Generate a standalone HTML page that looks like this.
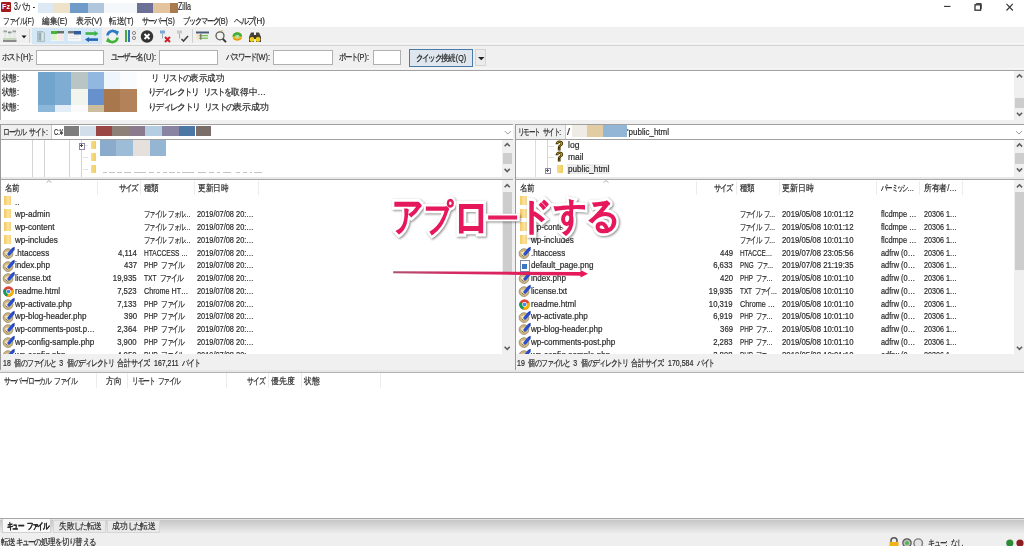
<!DOCTYPE html>
<html><head><meta charset="utf-8"><style>
html,body{margin:0;padding:0;}
body{width:1024px;height:546px;position:relative;overflow:hidden;background:#f0f0f0;font-family:"Liberation Sans", sans-serif;}
.t{position:absolute;white-space:pre;-webkit-text-stroke:0.2px #2a2a2a;filter:blur(0.35px);}
</style></head><body>
<div style="position:absolute;left:0px;top:0px;width:1024px;height:27px;background:#ffffff;"></div>
<div style="position:absolute;left:1.2px;top:1.8px;width:9.6px;height:9.9px;background:#a3191c;border-radius:1px"></div>
<div style="position:absolute;left:2px;top:3px;width:8px;height:8px;font:bold 7px/8px 'Liberation Sans',sans-serif;color:#fff;text-align:center">Fz</div>
<div class="t" style="left:14.00px;top:0.30px;font-size:10px;line-height:14px;color:#2a2a2a;font-weight:normal;word-spacing:2px;transform:scaleX(0.6971);transform-origin:left center;">3<span style="letter-spacing:-1.78px">パカ</span> -</div>
<div style="position:absolute;left:37.5px;top:3.2px;width:15.0px;height:9.4px;background:#dce8f4;"></div>
<div style="position:absolute;left:52.5px;top:3.2px;width:17.5px;height:9.4px;background:#eee2cb;"></div>
<div style="position:absolute;left:70px;top:3.2px;width:18px;height:9.4px;background:#6e9bc7;"></div>
<div style="position:absolute;left:88px;top:3.2px;width:16px;height:9.4px;background:#b0c6dc;"></div>
<div style="position:absolute;left:104px;top:3.2px;width:33px;height:9.4px;background:#f5f8fb;"></div>
<div style="position:absolute;left:137px;top:3.2px;width:16px;height:9.4px;background:#6c7097;"></div>
<div style="position:absolute;left:153px;top:3.2px;width:17px;height:9.4px;background:#e4c49f;"></div>
<div style="position:absolute;left:170px;top:3.2px;width:8px;height:9.4px;background:#a87a4d;"></div>
<div class="t" style="left:178.20px;top:0.00px;font-size:10px;line-height:14px;color:#2a2a2a;font-weight:normal;word-spacing:0px;transform:scaleX(0.7087);transform-origin:left center;">Zilla</div>
<svg style="position:absolute;left:940px;top:0;filter:blur(0.3px)" width="84" height="14" viewBox="0 0 84 14"><path d="M4 6.4H10.5" stroke="#333" stroke-width="1.1"/><rect x="35" y="4.8" width="5.6" height="5.4" fill="none" stroke="#333" stroke-width="1.3"/><path d="M36.2 4.2V3.6H41.2V8.8H40.8" fill="none" stroke="#333" stroke-width="1"/><path d="M66.5 3.8L72.8 10.5M72.8 3.8L66.5 10.5" stroke="#333" stroke-width="1.1"/></svg>
<div class="t" style="left:3.40px;top:15.10px;font-size:9px;line-height:13px;color:#2a2a2a;font-weight:normal;word-spacing:2px;transform:scaleX(0.7541);transform-origin:left center;"><span style="letter-spacing:-1.60px">ファイル</span>(F)</div>
<div class="t" style="left:42.40px;top:15.10px;font-size:9px;line-height:13px;color:#2a2a2a;font-weight:normal;word-spacing:2px;transform:scaleX(0.8433);transform-origin:left center;">編集(E)</div>
<div class="t" style="left:75.90px;top:15.10px;font-size:9px;line-height:13px;color:#2a2a2a;font-weight:normal;word-spacing:2px;transform:scaleX(0.8667);transform-origin:left center;">表示(V)</div>
<div class="t" style="left:109.40px;top:15.10px;font-size:9px;line-height:13px;color:#2a2a2a;font-weight:normal;word-spacing:2px;transform:scaleX(0.8339);transform-origin:left center;">転送(T)</div>
<div class="t" style="left:142.00px;top:15.10px;font-size:9px;line-height:13px;color:#2a2a2a;font-weight:normal;word-spacing:2px;transform:scaleX(0.7931);transform-origin:left center;"><span style="letter-spacing:-1.60px">サーバー</span>(S)</div>
<div class="t" style="left:183.00px;top:15.10px;font-size:9px;line-height:13px;color:#2a2a2a;font-weight:normal;word-spacing:2px;transform:scaleX(0.7978);transform-origin:left center;"><span style="letter-spacing:-1.60px">ブックマーク</span>(B)</div>
<div class="t" style="left:234.00px;top:15.10px;font-size:9px;line-height:13px;color:#2a2a2a;font-weight:normal;word-spacing:2px;transform:scaleX(0.8933);transform-origin:left center;"><span style="letter-spacing:-1.60px">ヘルプ</span>(H)</div>
<div style="position:absolute;left:0px;top:27px;width:1024px;height:18px;background:#f0f0f0;"></div>
<div style="position:absolute;left:0px;top:43.3px;width:1024px;height:1px;background:#f7f7f7;"></div>
<div style="position:absolute;left:0px;top:45px;width:1024px;height:1px;background:#d2d2d2;"></div>
<div style="position:absolute;left:0px;top:46px;width:1024px;height:23.5px;background:#f0f0f0;"></div>
<div style="position:absolute;left:0px;top:68.3px;width:1024px;height:1px;background:#f7f7f7;"></div>
<div style="position:absolute;left:0px;top:69.6px;width:1024px;height:1.2px;background:#a4a4a4;"></div>
<div class="t" style="left:2.00px;top:51.00px;font-size:9px;line-height:13px;color:#2a2a2a;font-weight:normal;word-spacing:2px;transform:scaleX(0.8333);transform-origin:left center;"><span style="letter-spacing:-1.60px">ホスト</span>(H):</div>
<div style="position:absolute;left:36.2px;top:50px;width:67.4px;height:15.2px;background:#fff;border:1px solid #b0b0b0;box-sizing:border-box"></div>
<div class="t" style="left:111.00px;top:51.00px;font-size:9px;line-height:13px;color:#2a2a2a;font-weight:normal;word-spacing:2px;transform:scaleX(0.8394);transform-origin:left center;"><span style="letter-spacing:-1.60px">ユーザー</span>名(U):</div>
<div style="position:absolute;left:159.2px;top:50px;width:58.8px;height:15.2px;background:#fff;border:1px solid #b0b0b0;box-sizing:border-box"></div>
<div class="t" style="left:225.50px;top:51.00px;font-size:9px;line-height:13px;color:#2a2a2a;font-weight:normal;word-spacing:2px;transform:scaleX(0.8146);transform-origin:left center;"><span style="letter-spacing:-1.60px">パスワード</span>(W):</div>
<div style="position:absolute;left:273.2px;top:50px;width:59.5px;height:15.2px;background:#fff;border:1px solid #b0b0b0;box-sizing:border-box"></div>
<div class="t" style="left:338.60px;top:51.00px;font-size:9px;line-height:13px;color:#2a2a2a;font-weight:normal;word-spacing:2px;transform:scaleX(0.8174);transform-origin:left center;"><span style="letter-spacing:-1.60px">ポート</span>(P):</div>
<div style="position:absolute;left:372.9px;top:50px;width:28.6px;height:15.2px;background:#fff;border:1px solid #b0b0b0;box-sizing:border-box"></div>
<div style="position:absolute;left:409px;top:49px;width:62px;height:15.5px;background:#dfe6ed;border:1.2px solid #4a7ba8"></div>
<div class="t" style="left:415.50px;top:51.95px;font-size:8.5px;line-height:12.5px;color:#222;font-weight:normal;word-spacing:2px;transform:scaleX(0.8299);transform-origin:left center;"><span style="letter-spacing:-1.51px">クイック</span>接続(Q)</div>
<div style="position:absolute;left:475px;top:49px;width:11px;height:17px;background:#ebebeb;border:1px solid #d4d4d4;box-sizing:border-box"></div>
<svg style="position:absolute;left:477.5px;top:56.5px" width="7" height="4"><path d="M0 0H6.5L3.25 3.2Z" fill="#222"/></svg>
<div style="position:absolute;left:0px;top:70.8px;width:1024px;height:49.2px;background:#ffffff;"></div>
<div style="position:absolute;left:0px;top:70.8px;width:1px;height:49.2px;background:#b0b0b0;"></div>
<div class="t" style="left:2.00px;top:71.60px;font-size:9px;line-height:13px;color:#2a2a2a;font-weight:normal;word-spacing:2px;transform:scaleX(0.8286);transform-origin:left center;">状態:</div>
<div class="t" style="left:2.00px;top:86.20px;font-size:9px;line-height:13px;color:#2a2a2a;font-weight:normal;word-spacing:2px;transform:scaleX(0.8286);transform-origin:left center;">状態:</div>
<div class="t" style="left:2.00px;top:100.80px;font-size:9px;line-height:13px;color:#2a2a2a;font-weight:normal;word-spacing:2px;transform:scaleX(0.8286);transform-origin:left center;">状態:</div>
<div style="position:absolute;left:38px;top:72px;width:16.6px;height:33px;background:#72a5cd;"></div>
<div style="position:absolute;left:38px;top:105px;width:16.6px;height:7px;background:#8db7d9;"></div>
<div style="position:absolute;left:54.6px;top:72px;width:16.4px;height:33px;background:#7eacd3;"></div>
<div style="position:absolute;left:54.6px;top:105px;width:16.4px;height:7px;background:#e3edf8;"></div>
<div style="position:absolute;left:71px;top:72px;width:17px;height:17px;background:#b9c5c5;"></div>
<div style="position:absolute;left:71px;top:89px;width:17px;height:16px;background:#f2f5ee;"></div>
<div style="position:absolute;left:71px;top:105px;width:17px;height:7px;background:#fafafa;"></div>
<div style="position:absolute;left:88px;top:72px;width:16px;height:17px;background:#90b8e0;"></div>
<div style="position:absolute;left:88px;top:89px;width:16px;height:16px;background:#6691cc;"></div>
<div style="position:absolute;left:88px;top:105px;width:16px;height:7px;background:#cbbd9d;"></div>
<div style="position:absolute;left:104px;top:72px;width:16.299999999999997px;height:17px;background:#eef5fc;"></div>
<div style="position:absolute;left:104px;top:89px;width:16.299999999999997px;height:23px;background:#a8774b;"></div>
<div style="position:absolute;left:120.3px;top:72px;width:16.39999999999999px;height:17px;background:#f9fbfd;"></div>
<div style="position:absolute;left:120.3px;top:89px;width:16.39999999999999px;height:23px;background:#b3825a;"></div>
<div class="t" style="left:151.00px;top:71.60px;font-size:9px;line-height:13px;color:#2a2a2a;font-weight:normal;word-spacing:2px;transform:scaleX(0.9416);transform-origin:left center;"><span style="letter-spacing:-1.60px">リ</span> <span style="letter-spacing:-1.60px">リストの</span>表示成功</div>
<div class="t" style="left:148.00px;top:86.20px;font-size:9px;line-height:13px;color:#2a2a2a;font-weight:normal;word-spacing:2px;transform:scaleX(0.9677);transform-origin:left center;"><span style="letter-spacing:-1.60px">りディレクトリ</span> <span style="letter-spacing:-1.60px">リストを</span>取得中…</div>
<div class="t" style="left:148.00px;top:100.80px;font-size:9px;line-height:13px;color:#2a2a2a;font-weight:normal;word-spacing:2px;transform:scaleX(0.9923);transform-origin:left center;"><span style="letter-spacing:-1.60px">りディレクトリ</span> <span style="letter-spacing:-1.60px">リストの</span>表示成功</div>
<div style="position:absolute;left:1014px;top:70.8px;width:10px;height:49.2px;background:#f0f0f0;"></div>
<div style="position:absolute;left:1015px;top:98px;width:9px;height:10.3px;background:#cdcdcd;"></div>
<svg style="position:absolute;left:0;top:0" width="1024" height="546"><path d="M1016.9 77.4L1019.5 74.8L1022.1 77.4" stroke="#606060" fill="none" stroke-width="1.6"/></svg>
<svg style="position:absolute;left:0;top:0" width="1024" height="546"><path d="M1016.9 112.8L1019.5 115.4L1022.1 112.8" stroke="#606060" fill="none" stroke-width="1.6"/></svg>
<div style="position:absolute;left:0px;top:120.5px;width:1024px;height:4px;background:#f0f0f0;"></div>
<div style="position:absolute;left:0px;top:124px;width:513px;height:1px;background:#a0a0a0;"></div>
<div style="position:absolute;left:515px;top:124px;width:509px;height:1px;background:#a0a0a0;"></div>
<div style="position:absolute;left:0px;top:139px;width:513px;height:1px;background:#a0a0a0;"></div>
<div style="position:absolute;left:515px;top:139px;width:509px;height:1px;background:#a0a0a0;"></div>
<div style="position:absolute;left:0px;top:125px;width:51px;height:14px;background:#f0f0f0;"></div>
<div style="position:absolute;left:51px;top:125px;width:1px;height:14px;background:#c8c8c8;"></div>
<div style="position:absolute;left:52px;top:125px;width:461px;height:14px;background:#ffffff;"></div>
<div class="t" style="left:3.00px;top:125.50px;font-size:9px;line-height:13px;color:#2a2a2a;font-weight:normal;word-spacing:2px;transform:scaleX(0.7647);transform-origin:left center;"><span style="letter-spacing:-1.60px">ローカル</span> <span style="letter-spacing:-1.60px">サイト</span>:</div>
<div class="t" style="left:54.00px;top:125.50px;font-size:9px;line-height:13px;color:#2a2a2a;font-weight:normal;word-spacing:0px;transform:scaleX(0.6421);transform-origin:left center;">C:¥</div>
<div style="position:absolute;left:63.7px;top:126.2px;width:15.799999999999997px;height:9.6px;background:#7d7d7d;"></div>
<div style="position:absolute;left:79.5px;top:126.2px;width:16.700000000000003px;height:9.6px;background:#d2dfea;"></div>
<div style="position:absolute;left:96.2px;top:126.2px;width:15.799999999999997px;height:9.6px;background:#994645;"></div>
<div style="position:absolute;left:112px;top:126.2px;width:17.599999999999994px;height:9.6px;background:#8d8079;"></div>
<div style="position:absolute;left:129.6px;top:126.2px;width:15.800000000000011px;height:9.6px;background:#8b7a8e;"></div>
<div style="position:absolute;left:145.4px;top:126.2px;width:16.69999999999999px;height:9.6px;background:#b5cde0;"></div>
<div style="position:absolute;left:162.1px;top:126.2px;width:16.700000000000017px;height:9.6px;background:#8884a2;"></div>
<div style="position:absolute;left:178.8px;top:126.2px;width:16.69999999999999px;height:9.6px;background:#4c77a5;"></div>
<div style="position:absolute;left:195.5px;top:126.2px;width:15.900000000000006px;height:9.6px;background:#7a6e6a;"></div>
<svg style="position:absolute;left:0;top:0" width="1024" height="546"><path d="M504.8 131.1L507.8 134.1L510.8 131.1" stroke="#9a9a9a" fill="none" stroke-width="1"/></svg>
<div style="position:absolute;left:515px;top:125px;width:50px;height:14px;background:#f0f0f0;"></div>
<div style="position:absolute;left:565px;top:125px;width:1px;height:14px;background:#c8c8c8;"></div>
<div style="position:absolute;left:566px;top:125px;width:458px;height:14px;background:#ffffff;"></div>
<div class="t" style="left:518.00px;top:125.50px;font-size:9px;line-height:13px;color:#2a2a2a;font-weight:normal;word-spacing:2px;transform:scaleX(0.7307);transform-origin:left center;"><span style="letter-spacing:-1.60px">リモート</span> <span style="letter-spacing:-1.60px">サイト</span>:</div>
<div class="t" style="left:567.00px;top:125.50px;font-size:9px;line-height:13px;color:#2a2a2a;font-weight:normal;word-spacing:0px;transform:scaleX(1.1925);transform-origin:left center;">/</div>
<div style="position:absolute;left:571.5px;top:125.3px;width:15.799999999999955px;height:11.4px;background:#efece6;"></div>
<div style="position:absolute;left:587.3px;top:125.3px;width:15.800000000000068px;height:11.4px;background:#e1cca3;"></div>
<div style="position:absolute;left:603.1px;top:125.3px;width:23.799999999999955px;height:11.4px;background:#93b5d6;"></div>
<div class="t" style="left:626.90px;top:125.80px;font-size:9px;line-height:13px;color:#2a2a2a;font-weight:normal;word-spacing:0px;transform:scaleX(0.8889);transform-origin:left center;">&#x27;public_html</div>
<svg style="position:absolute;left:0;top:0" width="1024" height="546"><path d="M1016 131.1L1019 134.1L1022 131.1" stroke="#9a9a9a" fill="none" stroke-width="1"/></svg>
<div style="position:absolute;left:513px;top:120.5px;width:2px;height:250px;background:#f0f0f0;"></div>
<div style="position:absolute;left:0px;top:140px;width:513px;height:36.5px;background:#ffffff;"></div>
<div style="position:absolute;left:515px;top:140px;width:509px;height:36.5px;background:#ffffff;"></div>
<div style="position:absolute;left:0px;top:140px;width:1px;height:37px;background:#a0a0a0;"></div>
<div style="position:absolute;left:0px;top:176.5px;width:1024px;height:2px;background:#e9e9e9;"></div>
<div style="position:absolute;left:0px;top:178.5px;width:513px;height:1.5px;background:#a8a8a8;"></div>
<div style="position:absolute;left:515px;top:178.5px;width:509px;height:1.5px;background:#a8a8a8;"></div>
<div style="position:absolute;left:32.0px;top:140px;width:1px;height:36.5px;background:#d4d4d4;"></div>
<div style="position:absolute;left:44.0px;top:140px;width:1px;height:36.5px;background:#d4d4d4;"></div>
<div style="position:absolute;left:69.3px;top:140px;width:1px;height:36.5px;background:#d4d4d4;"></div>
<div style="position:absolute;left:80.7px;top:140px;width:1px;height:36.5px;background:#d4d4d4;"></div>
<div style="position:absolute;left:83px;top:145px;width:5px;height:1px;background:#e2e2e2;"></div>
<div style="position:absolute;left:90.5px;top:141.2px;width:5.3px;height:7.9px;background:linear-gradient(90deg,#f7dc8a,#f2cd62);border-radius:0.5px"></div>
<div style="position:absolute;left:83px;top:157px;width:5px;height:1px;background:#e2e2e2;"></div>
<div style="position:absolute;left:90.5px;top:153.2px;width:5.3px;height:7.9px;background:linear-gradient(90deg,#f7dc8a,#f2cd62);border-radius:0.5px"></div>
<div style="position:absolute;left:83px;top:169px;width:5px;height:1px;background:#e2e2e2;"></div>
<div style="position:absolute;left:90.5px;top:165.2px;width:5.3px;height:7.9px;background:linear-gradient(90deg,#f7dc8a,#f2cd62);border-radius:0.5px"></div>
<div style="position:absolute;left:78.8px;top:142.8px;width:4.6px;height:4.8px;border:0.8px solid #8c8aa8;background:#fff"></div>
<div style="position:absolute;left:79.8px;top:145px;width:3px;height:0.8px;background:#444;"></div>
<div style="position:absolute;left:80.9px;top:143.9px;width:0.8px;height:3px;background:#444;"></div>
<div style="position:absolute;left:100px;top:139.5px;width:16px;height:16.5px;background:#8aabcb;"></div>
<div style="position:absolute;left:116px;top:139.5px;width:17px;height:16.5px;background:#9dbcd7;"></div>
<div style="position:absolute;left:133px;top:139.5px;width:17px;height:16.5px;background:#e6e0dd;"></div>
<div style="position:absolute;left:150px;top:139.5px;width:16px;height:16.5px;background:#94b6d3;"></div>
<div style="position:absolute;left:103px;top:171.5px;width:4px;height:1.5px;background:#c4c4c4;"></div>
<div style="position:absolute;left:109px;top:171.5px;width:6px;height:1.5px;background:#c4c4c4;"></div>
<div style="position:absolute;left:117px;top:171.5px;width:5px;height:1.5px;background:#c4c4c4;"></div>
<div style="position:absolute;left:124px;top:171.5px;width:7px;height:1.5px;background:#c4c4c4;"></div>
<div style="position:absolute;left:134px;top:171.5px;width:12px;height:1.5px;background:#c4c4c4;"></div>
<div style="position:absolute;left:149px;top:171.5px;width:5px;height:1.5px;background:#c4c4c4;"></div>
<div style="position:absolute;left:157px;top:171.5px;width:3px;height:1.5px;background:#c4c4c4;"></div>
<div style="position:absolute;left:163px;top:171.5px;width:4px;height:1.5px;background:#c4c4c4;"></div>
<div style="position:absolute;left:169px;top:171.5px;width:6px;height:1.5px;background:#c4c4c4;"></div>
<div style="position:absolute;left:177px;top:171.5px;width:3px;height:1.5px;background:#c4c4c4;"></div>
<div style="position:absolute;left:182px;top:171.5px;width:12px;height:1.5px;background:#c4c4c4;"></div>
<div style="position:absolute;left:198px;top:171.5px;width:8px;height:1.5px;background:#c4c4c4;"></div>
<div style="position:absolute;left:209px;top:171.5px;width:5px;height:1.5px;background:#c4c4c4;"></div>
<div style="position:absolute;left:217px;top:171.5px;width:3px;height:1.5px;background:#c4c4c4;"></div>
<div style="position:absolute;left:223px;top:171.5px;width:8px;height:1.5px;background:#c4c4c4;"></div>
<div style="position:absolute;left:236px;top:171.5px;width:4px;height:1.5px;background:#c4c4c4;"></div>
<div style="position:absolute;left:243px;top:171.5px;width:4px;height:1.5px;background:#c4c4c4;"></div>
<div style="position:absolute;left:250px;top:171.5px;width:2px;height:1.5px;background:#c4c4c4;"></div>
<div style="position:absolute;left:254px;top:171.5px;width:8px;height:1.5px;background:#c4c4c4;"></div>
<div style="position:absolute;left:502px;top:140px;width:11px;height:37px;background:#f0f0f0;"></div>
<div style="position:absolute;left:502.5px;top:152.8px;width:9px;height:11px;background:#cdcdcd;"></div>
<svg style="position:absolute;left:0;top:0" width="1024" height="546"><path d="M504.59999999999997 146.20000000000002L507.2 143.60000000000002L509.8 146.20000000000002" stroke="#606060" fill="none" stroke-width="1.6"/></svg>
<svg style="position:absolute;left:0;top:0" width="1024" height="546"><path d="M504.59999999999997 168.9L507.2 171.5L509.8 168.9" stroke="#606060" fill="none" stroke-width="1.6"/></svg>
<div style="position:absolute;left:535.2px;top:140px;width:1px;height:36.5px;background:#dcdcdc;"></div>
<div style="position:absolute;left:547px;top:140px;width:1px;height:30px;background:#d4d4d4;"></div>
<div style="position:absolute;left:548px;top:145.7px;width:6px;height:1px;background:#e0e0e0;"></div>
<div class="t" style="left:555.5px;top:137.7px;font-size:13px;line-height:16px;font-weight:bold;color:#e6b800;-webkit-text-stroke:0.9px #3d3000;filter:blur(0.3px)">?</div>
<div style="position:absolute;left:548px;top:157.4px;width:6px;height:1px;background:#e0e0e0;"></div>
<div class="t" style="left:555.5px;top:149.4px;font-size:13px;line-height:16px;font-weight:bold;color:#e6b800;-webkit-text-stroke:0.9px #3d3000;filter:blur(0.3px)">?</div>
<div style="position:absolute;left:544.9px;top:167.6px;width:4px;height:4px;border:0.8px solid #8c8aa8;background:#fff"></div>
<div style="position:absolute;left:545.8px;top:169.6px;width:3px;height:0.8px;background:#555;"></div>
<div style="position:absolute;left:546.9px;top:168.5px;width:0.8px;height:3px;background:#555;"></div>
<div style="position:absolute;left:557.2px;top:165px;width:6px;height:8px;background:linear-gradient(90deg,#f7dc8a,#f2cd62)"></div>
<div style="position:absolute;left:566.8px;top:164px;width:43.2px;height:9.8px;background:#ececec;"></div>
<div class="t" style="left:567.70px;top:139.20px;font-size:9px;line-height:13px;color:#2a2a2a;font-weight:normal;word-spacing:0px;transform:scaleX(0.9488);transform-origin:left center;">log</div>
<div class="t" style="left:567.70px;top:150.90px;font-size:9px;line-height:13px;color:#2a2a2a;font-weight:normal;word-spacing:0px;transform:scaleX(0.9385);transform-origin:left center;">mail</div>
<div class="t" style="left:567.70px;top:162.50px;font-size:9px;line-height:13px;color:#2a2a2a;font-weight:normal;word-spacing:0px;transform:scaleX(0.9071);transform-origin:left center;">public_html</div>
<div style="position:absolute;left:1014px;top:140px;width:10px;height:37px;background:#f0f0f0;"></div>
<div style="position:absolute;left:1015px;top:153.2px;width:9px;height:10.8px;background:#cdcdcd;"></div>
<svg style="position:absolute;left:0;top:0" width="1024" height="546"><path d="M1016.9 146.6L1019.5 144.0L1022.1 146.6" stroke="#606060" fill="none" stroke-width="1.6"/></svg>
<svg style="position:absolute;left:0;top:0" width="1024" height="546"><path d="M1016.9 168.4L1019.5 171.0L1022.1 168.4" stroke="#606060" fill="none" stroke-width="1.6"/></svg>
<div style="position:absolute;left:0px;top:180px;width:513px;height:174px;background:#ffffff;"></div>
<div style="position:absolute;left:515px;top:180px;width:509px;height:174px;background:#ffffff;"></div>
<div style="position:absolute;left:97px;top:181px;width:1px;height:14px;background:#ececec;"></div>
<div style="position:absolute;left:140px;top:181px;width:1px;height:14px;background:#ececec;"></div>
<div style="position:absolute;left:193.5px;top:181px;width:1px;height:14px;background:#ececec;"></div>
<div style="position:absolute;left:258px;top:181px;width:1px;height:14px;background:#ececec;"></div>
<div style="position:absolute;left:696px;top:181px;width:1px;height:14px;background:#ececec;"></div>
<div style="position:absolute;left:736px;top:181px;width:1px;height:14px;background:#ececec;"></div>
<div style="position:absolute;left:779px;top:181px;width:1px;height:14px;background:#ececec;"></div>
<div style="position:absolute;left:876px;top:181px;width:1px;height:14px;background:#ececec;"></div>
<div style="position:absolute;left:919px;top:181px;width:1px;height:14px;background:#ececec;"></div>
<div style="position:absolute;left:962px;top:181px;width:1px;height:14px;background:#ececec;"></div>
<svg style="position:absolute;left:45.5px;top:179.5px" width="6" height="3"><path d="M0.5 2.5L3 0.5L5.5 2.5" stroke="#a8a8a8" fill="none" stroke-width="0.9"/></svg>
<svg style="position:absolute;left:602.5px;top:179.5px" width="6" height="3"><path d="M0.5 2.5L3 0.5L5.5 2.5" stroke="#a8a8a8" fill="none" stroke-width="0.9"/></svg>
<div class="t" style="left:4.80px;top:181.50px;font-size:9px;line-height:13px;color:#2a2a2a;font-weight:normal;word-spacing:2px;transform:scaleX(0.8333);transform-origin:left center;">名前</div>
<div class="t" style="left:114.80px;top:181.50px;font-size:9px;line-height:13px;color:#2a2a2a;font-weight:normal;word-spacing:2px;transform:scaleX(0.8332);transform-origin:right center;"><span style="letter-spacing:-1.60px">サイズ</span></div>
<div class="t" style="left:144.00px;top:181.50px;font-size:9px;line-height:13px;color:#2a2a2a;font-weight:normal;word-spacing:2px;transform:scaleX(0.8333);transform-origin:left center;">種類</div>
<div class="t" style="left:198.00px;top:181.50px;font-size:9px;line-height:13px;color:#2a2a2a;font-weight:normal;word-spacing:2px;transform:scaleX(0.8528);transform-origin:left center;">更新日時</div>
<div class="t" style="left:520.00px;top:181.50px;font-size:9px;line-height:13px;color:#2a2a2a;font-weight:normal;word-spacing:2px;transform:scaleX(0.8333);transform-origin:left center;">名前</div>
<div class="t" style="left:710.20px;top:181.50px;font-size:9px;line-height:13px;color:#2a2a2a;font-weight:normal;word-spacing:2px;transform:scaleX(0.8107);transform-origin:right center;"><span style="letter-spacing:-1.60px">サイズ</span></div>
<div class="t" style="left:739.80px;top:181.50px;font-size:9px;line-height:13px;color:#2a2a2a;font-weight:normal;word-spacing:2px;transform:scaleX(0.8333);transform-origin:left center;">種類</div>
<div class="t" style="left:782.20px;top:181.50px;font-size:9px;line-height:13px;color:#2a2a2a;font-weight:normal;word-spacing:2px;transform:scaleX(0.8778);transform-origin:left center;">更新日時</div>
<div class="t" style="left:881.40px;top:181.50px;font-size:9px;line-height:13px;color:#2a2a2a;font-weight:normal;word-spacing:2px;transform:scaleX(0.7171);transform-origin:left center;"><span style="letter-spacing:-1.60px">パーミッシ</span>…</div>
<div class="t" style="left:923.80px;top:181.50px;font-size:9px;line-height:13px;color:#2a2a2a;font-weight:normal;word-spacing:2px;transform:scaleX(0.8568);transform-origin:left center;">所有者/…</div>
<div style="position:absolute;left:4px;top:196.29999999999998px;width:6.5px;height:9px;background:linear-gradient(90deg,#f3c960,#fbe3a0 60%,#f5d27c);filter:blur(0.25px)"></div>
<div class="t" style="left:15.00px;top:195.60px;font-size:9px;line-height:13px;color:#2a2a2a;font-weight:normal;word-spacing:0px;transform:scaleX(0.9000);transform-origin:left center;">..</div>
<div style="position:absolute;left:4px;top:209.04999999999998px;width:6.5px;height:9px;background:linear-gradient(90deg,#f3c960,#fbe3a0 60%,#f5d27c);filter:blur(0.25px)"></div>
<div class="t" style="left:15.00px;top:208.35px;font-size:9px;line-height:13px;color:#2a2a2a;font-weight:normal;word-spacing:0px;transform:scaleX(0.9000);transform-origin:left center;">wp-admin</div>
<div class="t" style="left:143.50px;top:208.35px;font-size:9px;line-height:13px;color:#2a2a2a;font-weight:normal;word-spacing:2px;transform:scaleX(0.7149);transform-origin:left center;"><span style="letter-spacing:-1.60px">ファイル</span> <span style="letter-spacing:-1.60px">フォル</span>…</div>
<div class="t" style="left:196.50px;top:208.35px;font-size:9px;line-height:13px;color:#2a2a2a;font-weight:normal;word-spacing:0px;transform:scaleX(0.8210);transform-origin:left center;">2019/07/08 20:…</div>
<div style="position:absolute;left:4px;top:221.79999999999998px;width:6.5px;height:9px;background:linear-gradient(90deg,#f3c960,#fbe3a0 60%,#f5d27c);filter:blur(0.25px)"></div>
<div class="t" style="left:15.00px;top:221.10px;font-size:9px;line-height:13px;color:#2a2a2a;font-weight:normal;word-spacing:0px;transform:scaleX(0.9000);transform-origin:left center;">wp-content</div>
<div class="t" style="left:143.50px;top:221.10px;font-size:9px;line-height:13px;color:#2a2a2a;font-weight:normal;word-spacing:2px;transform:scaleX(0.7149);transform-origin:left center;"><span style="letter-spacing:-1.60px">ファイル</span> <span style="letter-spacing:-1.60px">フォル</span>…</div>
<div class="t" style="left:196.50px;top:221.10px;font-size:9px;line-height:13px;color:#2a2a2a;font-weight:normal;word-spacing:0px;transform:scaleX(0.8210);transform-origin:left center;">2019/07/08 20:…</div>
<div style="position:absolute;left:4px;top:234.54999999999998px;width:6.5px;height:9px;background:linear-gradient(90deg,#f3c960,#fbe3a0 60%,#f5d27c);filter:blur(0.25px)"></div>
<div class="t" style="left:15.00px;top:233.85px;font-size:9px;line-height:13px;color:#2a2a2a;font-weight:normal;word-spacing:0px;transform:scaleX(0.9000);transform-origin:left center;">wp-includes</div>
<div class="t" style="left:143.50px;top:233.85px;font-size:9px;line-height:13px;color:#2a2a2a;font-weight:normal;word-spacing:2px;transform:scaleX(0.7149);transform-origin:left center;"><span style="letter-spacing:-1.60px">ファイル</span> <span style="letter-spacing:-1.60px">フォル</span>…</div>
<div class="t" style="left:196.50px;top:233.85px;font-size:9px;line-height:13px;color:#2a2a2a;font-weight:normal;word-spacing:0px;transform:scaleX(0.8210);transform-origin:left center;">2019/07/08 20:…</div>
<svg style="position:absolute;left:1.7999999999999998px;top:245.9px;filter:blur(0.25px)" width="13" height="13" viewBox="0 0 13 13"><circle cx="6" cy="7.6" r="4.9" fill="#cbb684" stroke="#8f7f58" stroke-width="0.7"/><path d="M3 6.5Q6 4.5 8.5 7Q6 11 3.5 9Z" fill="#eee2bf"/><path d="M3.5 8.5L5.5 10.5" stroke="#6f6048" stroke-width="0.8"/><path d="M7 8L11 3.4" stroke="#2a4ed0" stroke-width="3.2" stroke-linecap="round"/><path d="M10.2 2L12.8 0.8L12.2 3.6Z" fill="#1b2f86"/></svg>
<div class="t" style="left:15.00px;top:246.60px;font-size:9px;line-height:13px;color:#2a2a2a;font-weight:normal;word-spacing:0px;transform:scaleX(0.9000);transform-origin:left center;">.htaccess</div>
<div class="t" style="left:115.14px;top:246.60px;font-size:9px;line-height:13px;color:#2a2a2a;font-weight:normal;word-spacing:0px;transform:scaleX(0.8600);transform-origin:right center;">4,114</div>
<div class="t" style="left:143.50px;top:246.60px;font-size:9px;line-height:13px;color:#2a2a2a;font-weight:normal;word-spacing:0px;transform:scaleX(0.7343);transform-origin:left center;">HTACCESS …</div>
<div class="t" style="left:196.50px;top:246.60px;font-size:9px;line-height:13px;color:#2a2a2a;font-weight:normal;word-spacing:0px;transform:scaleX(0.8210);transform-origin:left center;">2019/07/08 20:…</div>
<svg style="position:absolute;left:1.7999999999999998px;top:258.65000000000003px;filter:blur(0.25px)" width="13" height="13" viewBox="0 0 13 13"><circle cx="6" cy="7.6" r="4.9" fill="#cbb684" stroke="#8f7f58" stroke-width="0.7"/><path d="M3 6.5Q6 4.5 8.5 7Q6 11 3.5 9Z" fill="#eee2bf"/><path d="M3.5 8.5L5.5 10.5" stroke="#6f6048" stroke-width="0.8"/><path d="M7 8L11 3.4" stroke="#2a4ed0" stroke-width="3.2" stroke-linecap="round"/><path d="M10.2 2L12.8 0.8L12.2 3.6Z" fill="#1b2f86"/></svg>
<div class="t" style="left:15.00px;top:259.35px;font-size:9px;line-height:13px;color:#2a2a2a;font-weight:normal;word-spacing:0px;transform:scaleX(0.9000);transform-origin:left center;">index.php</div>
<div class="t" style="left:121.97px;top:259.35px;font-size:9px;line-height:13px;color:#2a2a2a;font-weight:normal;word-spacing:0px;transform:scaleX(0.8600);transform-origin:right center;">437</div>
<div class="t" style="left:143.50px;top:259.35px;font-size:9px;line-height:13px;color:#2a2a2a;font-weight:normal;word-spacing:2px;transform:scaleX(0.7482);transform-origin:left center;">PHP <span style="letter-spacing:-1.60px">ファイル</span></div>
<div class="t" style="left:196.50px;top:259.35px;font-size:9px;line-height:13px;color:#2a2a2a;font-weight:normal;word-spacing:0px;transform:scaleX(0.8210);transform-origin:left center;">2019/07/08 20:…</div>
<svg style="position:absolute;left:1.7999999999999998px;top:271.40000000000003px;filter:blur(0.25px)" width="13" height="13" viewBox="0 0 13 13"><circle cx="6" cy="7.6" r="4.9" fill="#cbb684" stroke="#8f7f58" stroke-width="0.7"/><path d="M3 6.5Q6 4.5 8.5 7Q6 11 3.5 9Z" fill="#eee2bf"/><path d="M3.5 8.5L5.5 10.5" stroke="#6f6048" stroke-width="0.8"/><path d="M7 8L11 3.4" stroke="#2a4ed0" stroke-width="3.2" stroke-linecap="round"/><path d="M10.2 2L12.8 0.8L12.2 3.6Z" fill="#1b2f86"/></svg>
<div class="t" style="left:15.00px;top:272.10px;font-size:9px;line-height:13px;color:#2a2a2a;font-weight:normal;word-spacing:0px;transform:scaleX(0.9000);transform-origin:left center;">license.txt</div>
<div class="t" style="left:109.47px;top:272.10px;font-size:9px;line-height:13px;color:#2a2a2a;font-weight:normal;word-spacing:0px;transform:scaleX(0.8600);transform-origin:right center;">19,935</div>
<div class="t" style="left:143.50px;top:272.10px;font-size:9px;line-height:13px;color:#2a2a2a;font-weight:normal;word-spacing:2px;transform:scaleX(0.7476);transform-origin:left center;">TXT <span style="letter-spacing:-1.60px">ファイル</span></div>
<div class="t" style="left:196.50px;top:272.10px;font-size:9px;line-height:13px;color:#2a2a2a;font-weight:normal;word-spacing:0px;transform:scaleX(0.8210);transform-origin:left center;">2019/07/08 20:…</div>
<svg style="position:absolute;left:2.8px;top:286.05px" width="11" height="11" viewBox="0 0 11 11"><circle cx="5.5" cy="5.5" r="5.2" fill="#db4437"/><path d="M5.5 5.5L0.8 3.2A5.2 5.2 0 0 0 4.2 10.5Z" fill="#0f9d58"/><path d="M5.5 5.5L4.2 10.5A5.2 5.2 0 0 0 10.4 3.6Z" fill="#f4b400"/><circle cx="5.5" cy="5.5" r="2.4" fill="#fff"/><circle cx="5.5" cy="5.5" r="1.8" fill="#4285f4"/></svg>
<div class="t" style="left:15.00px;top:284.85px;font-size:9px;line-height:13px;color:#2a2a2a;font-weight:normal;word-spacing:0px;transform:scaleX(0.9000);transform-origin:left center;">readme.html</div>
<div class="t" style="left:114.47px;top:284.85px;font-size:9px;line-height:13px;color:#2a2a2a;font-weight:normal;word-spacing:0px;transform:scaleX(0.8600);transform-origin:right center;">7,523</div>
<div class="t" style="left:143.50px;top:284.85px;font-size:9px;line-height:13px;color:#2a2a2a;font-weight:normal;word-spacing:0px;transform:scaleX(0.7966);transform-origin:left center;">Chrome HT…</div>
<div class="t" style="left:196.50px;top:284.85px;font-size:9px;line-height:13px;color:#2a2a2a;font-weight:normal;word-spacing:0px;transform:scaleX(0.8210);transform-origin:left center;">2019/07/08 20:…</div>
<svg style="position:absolute;left:1.7999999999999998px;top:296.90000000000003px;filter:blur(0.25px)" width="13" height="13" viewBox="0 0 13 13"><circle cx="6" cy="7.6" r="4.9" fill="#cbb684" stroke="#8f7f58" stroke-width="0.7"/><path d="M3 6.5Q6 4.5 8.5 7Q6 11 3.5 9Z" fill="#eee2bf"/><path d="M3.5 8.5L5.5 10.5" stroke="#6f6048" stroke-width="0.8"/><path d="M7 8L11 3.4" stroke="#2a4ed0" stroke-width="3.2" stroke-linecap="round"/><path d="M10.2 2L12.8 0.8L12.2 3.6Z" fill="#1b2f86"/></svg>
<div class="t" style="left:15.00px;top:297.60px;font-size:9px;line-height:13px;color:#2a2a2a;font-weight:normal;word-spacing:0px;transform:scaleX(0.9000);transform-origin:left center;">wp-activate.php</div>
<div class="t" style="left:114.47px;top:297.60px;font-size:9px;line-height:13px;color:#2a2a2a;font-weight:normal;word-spacing:0px;transform:scaleX(0.8600);transform-origin:right center;">7,133</div>
<div class="t" style="left:143.50px;top:297.60px;font-size:9px;line-height:13px;color:#2a2a2a;font-weight:normal;word-spacing:2px;transform:scaleX(0.7482);transform-origin:left center;">PHP <span style="letter-spacing:-1.60px">ファイル</span></div>
<div class="t" style="left:196.50px;top:297.60px;font-size:9px;line-height:13px;color:#2a2a2a;font-weight:normal;word-spacing:0px;transform:scaleX(0.8210);transform-origin:left center;">2019/07/08 20:…</div>
<svg style="position:absolute;left:1.7999999999999998px;top:309.65000000000003px;filter:blur(0.25px)" width="13" height="13" viewBox="0 0 13 13"><circle cx="6" cy="7.6" r="4.9" fill="#cbb684" stroke="#8f7f58" stroke-width="0.7"/><path d="M3 6.5Q6 4.5 8.5 7Q6 11 3.5 9Z" fill="#eee2bf"/><path d="M3.5 8.5L5.5 10.5" stroke="#6f6048" stroke-width="0.8"/><path d="M7 8L11 3.4" stroke="#2a4ed0" stroke-width="3.2" stroke-linecap="round"/><path d="M10.2 2L12.8 0.8L12.2 3.6Z" fill="#1b2f86"/></svg>
<div class="t" style="left:15.00px;top:310.35px;font-size:9px;line-height:13px;color:#2a2a2a;font-weight:normal;word-spacing:0px;transform:scaleX(0.9000);transform-origin:left center;">wp-blog-header.php</div>
<div class="t" style="left:121.97px;top:310.35px;font-size:9px;line-height:13px;color:#2a2a2a;font-weight:normal;word-spacing:0px;transform:scaleX(0.8600);transform-origin:right center;">390</div>
<div class="t" style="left:143.50px;top:310.35px;font-size:9px;line-height:13px;color:#2a2a2a;font-weight:normal;word-spacing:2px;transform:scaleX(0.7482);transform-origin:left center;">PHP <span style="letter-spacing:-1.60px">ファイル</span></div>
<div class="t" style="left:196.50px;top:310.35px;font-size:9px;line-height:13px;color:#2a2a2a;font-weight:normal;word-spacing:0px;transform:scaleX(0.8210);transform-origin:left center;">2019/07/08 20:…</div>
<svg style="position:absolute;left:1.7999999999999998px;top:322.40000000000003px;filter:blur(0.25px)" width="13" height="13" viewBox="0 0 13 13"><circle cx="6" cy="7.6" r="4.9" fill="#cbb684" stroke="#8f7f58" stroke-width="0.7"/><path d="M3 6.5Q6 4.5 8.5 7Q6 11 3.5 9Z" fill="#eee2bf"/><path d="M3.5 8.5L5.5 10.5" stroke="#6f6048" stroke-width="0.8"/><path d="M7 8L11 3.4" stroke="#2a4ed0" stroke-width="3.2" stroke-linecap="round"/><path d="M10.2 2L12.8 0.8L12.2 3.6Z" fill="#1b2f86"/></svg>
<div class="t" style="left:15.00px;top:323.10px;font-size:9px;line-height:13px;color:#2a2a2a;font-weight:normal;word-spacing:0px;transform:scaleX(0.8622);transform-origin:left center;">wp-comments-post.p…</div>
<div class="t" style="left:114.47px;top:323.10px;font-size:9px;line-height:13px;color:#2a2a2a;font-weight:normal;word-spacing:0px;transform:scaleX(0.8600);transform-origin:right center;">2,364</div>
<div class="t" style="left:143.50px;top:323.10px;font-size:9px;line-height:13px;color:#2a2a2a;font-weight:normal;word-spacing:2px;transform:scaleX(0.7482);transform-origin:left center;">PHP <span style="letter-spacing:-1.60px">ファイル</span></div>
<div class="t" style="left:196.50px;top:323.10px;font-size:9px;line-height:13px;color:#2a2a2a;font-weight:normal;word-spacing:0px;transform:scaleX(0.8210);transform-origin:left center;">2019/07/08 20:…</div>
<svg style="position:absolute;left:1.7999999999999998px;top:335.15000000000003px;filter:blur(0.25px)" width="13" height="13" viewBox="0 0 13 13"><circle cx="6" cy="7.6" r="4.9" fill="#cbb684" stroke="#8f7f58" stroke-width="0.7"/><path d="M3 6.5Q6 4.5 8.5 7Q6 11 3.5 9Z" fill="#eee2bf"/><path d="M3.5 8.5L5.5 10.5" stroke="#6f6048" stroke-width="0.8"/><path d="M7 8L11 3.4" stroke="#2a4ed0" stroke-width="3.2" stroke-linecap="round"/><path d="M10.2 2L12.8 0.8L12.2 3.6Z" fill="#1b2f86"/></svg>
<div class="t" style="left:15.00px;top:335.85px;font-size:9px;line-height:13px;color:#2a2a2a;font-weight:normal;word-spacing:0px;transform:scaleX(0.9000);transform-origin:left center;">wp-config-sample.php</div>
<div class="t" style="left:114.47px;top:335.85px;font-size:9px;line-height:13px;color:#2a2a2a;font-weight:normal;word-spacing:0px;transform:scaleX(0.8600);transform-origin:right center;">3,900</div>
<div class="t" style="left:143.50px;top:335.85px;font-size:9px;line-height:13px;color:#2a2a2a;font-weight:normal;word-spacing:2px;transform:scaleX(0.7482);transform-origin:left center;">PHP <span style="letter-spacing:-1.60px">ファイル</span></div>
<div class="t" style="left:196.50px;top:335.85px;font-size:9px;line-height:13px;color:#2a2a2a;font-weight:normal;word-spacing:0px;transform:scaleX(0.8210);transform-origin:left center;">2019/07/08 20:…</div>
<svg style="position:absolute;left:1.7999999999999998px;top:347.90000000000003px;filter:blur(0.25px)" width="13" height="13" viewBox="0 0 13 13"><circle cx="6" cy="7.6" r="4.9" fill="#cbb684" stroke="#8f7f58" stroke-width="0.7"/><path d="M3 6.5Q6 4.5 8.5 7Q6 11 3.5 9Z" fill="#eee2bf"/><path d="M3.5 8.5L5.5 10.5" stroke="#6f6048" stroke-width="0.8"/><path d="M7 8L11 3.4" stroke="#2a4ed0" stroke-width="3.2" stroke-linecap="round"/><path d="M10.2 2L12.8 0.8L12.2 3.6Z" fill="#1b2f86"/></svg>
<div class="t" style="left:15.00px;top:348.60px;font-size:9px;line-height:13px;color:#2a2a2a;font-weight:normal;word-spacing:0px;transform:scaleX(0.9000);transform-origin:left center;">wp-config.php</div>
<div class="t" style="left:114.47px;top:348.60px;font-size:9px;line-height:13px;color:#2a2a2a;font-weight:normal;word-spacing:0px;transform:scaleX(0.8600);transform-origin:right center;">4,050</div>
<div class="t" style="left:143.50px;top:348.60px;font-size:9px;line-height:13px;color:#2a2a2a;font-weight:normal;word-spacing:2px;transform:scaleX(0.7482);transform-origin:left center;">PHP <span style="letter-spacing:-1.60px">ファイル</span></div>
<div class="t" style="left:196.50px;top:348.60px;font-size:9px;line-height:13px;color:#2a2a2a;font-weight:normal;word-spacing:0px;transform:scaleX(0.8210);transform-origin:left center;">2019/07/08 20:…</div>
<div style="position:absolute;left:520px;top:196.29999999999998px;width:6.5px;height:9px;background:linear-gradient(90deg,#f3c960,#fbe3a0 60%,#f5d27c);filter:blur(0.25px)"></div>
<div class="t" style="left:530.50px;top:195.60px;font-size:9px;line-height:13px;color:#2a2a2a;font-weight:normal;word-spacing:0px;transform:scaleX(0.9000);transform-origin:left center;">..</div>
<div style="position:absolute;left:520px;top:209.04999999999998px;width:6.5px;height:9px;background:linear-gradient(90deg,#f3c960,#fbe3a0 60%,#f5d27c);filter:blur(0.25px)"></div>
<div class="t" style="left:739.80px;top:208.35px;font-size:9px;line-height:13px;color:#2a2a2a;font-weight:normal;word-spacing:2px;transform:scaleX(0.7009);transform-origin:left center;"><span style="letter-spacing:-1.60px">ファイル</span> <span style="letter-spacing:-1.60px">フ</span>…</div>
<div class="t" style="left:782.20px;top:208.35px;font-size:9px;line-height:13px;color:#2a2a2a;font-weight:normal;word-spacing:0px;transform:scaleX(0.8656);transform-origin:left center;">2019/05/08 10:01:12</div>
<div class="t" style="left:881.40px;top:208.35px;font-size:9px;line-height:13px;color:#2a2a2a;font-weight:normal;word-spacing:0px;transform:scaleX(0.8268);transform-origin:left center;">flcdmpe …</div>
<div class="t" style="left:923.80px;top:208.35px;font-size:9px;line-height:13px;color:#2a2a2a;font-weight:normal;word-spacing:0px;transform:scaleX(0.7953);transform-origin:left center;">20306 1…</div>
<div style="position:absolute;left:520px;top:221.79999999999998px;width:6.5px;height:9px;background:linear-gradient(90deg,#f3c960,#fbe3a0 60%,#f5d27c);filter:blur(0.25px)"></div>
<div class="t" style="left:530.50px;top:221.10px;font-size:9px;line-height:13px;color:#2a2a2a;font-weight:normal;word-spacing:0px;transform:scaleX(0.9000);transform-origin:left center;">wp-content</div>
<div class="t" style="left:739.80px;top:221.10px;font-size:9px;line-height:13px;color:#2a2a2a;font-weight:normal;word-spacing:2px;transform:scaleX(0.7009);transform-origin:left center;"><span style="letter-spacing:-1.60px">ファイル</span> <span style="letter-spacing:-1.60px">フ</span>…</div>
<div class="t" style="left:782.20px;top:221.10px;font-size:9px;line-height:13px;color:#2a2a2a;font-weight:normal;word-spacing:0px;transform:scaleX(0.8656);transform-origin:left center;">2019/05/08 10:01:12</div>
<div class="t" style="left:881.40px;top:221.10px;font-size:9px;line-height:13px;color:#2a2a2a;font-weight:normal;word-spacing:0px;transform:scaleX(0.8268);transform-origin:left center;">flcdmpe …</div>
<div class="t" style="left:923.80px;top:221.10px;font-size:9px;line-height:13px;color:#2a2a2a;font-weight:normal;word-spacing:0px;transform:scaleX(0.7953);transform-origin:left center;">20306 1…</div>
<div style="position:absolute;left:520px;top:234.54999999999998px;width:6.5px;height:9px;background:linear-gradient(90deg,#f3c960,#fbe3a0 60%,#f5d27c);filter:blur(0.25px)"></div>
<div class="t" style="left:530.50px;top:233.85px;font-size:9px;line-height:13px;color:#2a2a2a;font-weight:normal;word-spacing:0px;transform:scaleX(0.9000);transform-origin:left center;">wp-includes</div>
<div class="t" style="left:739.80px;top:233.85px;font-size:9px;line-height:13px;color:#2a2a2a;font-weight:normal;word-spacing:2px;transform:scaleX(0.7009);transform-origin:left center;"><span style="letter-spacing:-1.60px">ファイル</span> <span style="letter-spacing:-1.60px">フ</span>…</div>
<div class="t" style="left:782.20px;top:233.85px;font-size:9px;line-height:13px;color:#2a2a2a;font-weight:normal;word-spacing:0px;transform:scaleX(0.8656);transform-origin:left center;">2019/05/08 10:01:10</div>
<div class="t" style="left:881.40px;top:233.85px;font-size:9px;line-height:13px;color:#2a2a2a;font-weight:normal;word-spacing:0px;transform:scaleX(0.8268);transform-origin:left center;">flcdmpe …</div>
<div class="t" style="left:923.80px;top:233.85px;font-size:9px;line-height:13px;color:#2a2a2a;font-weight:normal;word-spacing:0px;transform:scaleX(0.7953);transform-origin:left center;">20306 1…</div>
<svg style="position:absolute;left:517.8px;top:245.9px;filter:blur(0.25px)" width="13" height="13" viewBox="0 0 13 13"><circle cx="6" cy="7.6" r="4.9" fill="#cbb684" stroke="#8f7f58" stroke-width="0.7"/><path d="M3 6.5Q6 4.5 8.5 7Q6 11 3.5 9Z" fill="#eee2bf"/><path d="M3.5 8.5L5.5 10.5" stroke="#6f6048" stroke-width="0.8"/><path d="M7 8L11 3.4" stroke="#2a4ed0" stroke-width="3.2" stroke-linecap="round"/><path d="M10.2 2L12.8 0.8L12.2 3.6Z" fill="#1b2f86"/></svg>
<div class="t" style="left:530.50px;top:246.60px;font-size:9px;line-height:13px;color:#2a2a2a;font-weight:normal;word-spacing:0px;transform:scaleX(0.9000);transform-origin:left center;">.htaccess</div>
<div class="t" style="left:717.97px;top:246.60px;font-size:9px;line-height:13px;color:#2a2a2a;font-weight:normal;word-spacing:0px;transform:scaleX(0.8600);transform-origin:right center;">449</div>
<div class="t" style="left:739.80px;top:246.60px;font-size:9px;line-height:13px;color:#2a2a2a;font-weight:normal;word-spacing:0px;transform:scaleX(0.7106);transform-origin:left center;">HTACCE…</div>
<div class="t" style="left:782.20px;top:246.60px;font-size:9px;line-height:13px;color:#2a2a2a;font-weight:normal;word-spacing:0px;transform:scaleX(0.8656);transform-origin:left center;">2019/07/08 23:05:56</div>
<div class="t" style="left:881.40px;top:246.60px;font-size:9px;line-height:13px;color:#2a2a2a;font-weight:normal;word-spacing:0px;transform:scaleX(0.8196);transform-origin:left center;">adfrw (0…</div>
<div class="t" style="left:923.80px;top:246.60px;font-size:9px;line-height:13px;color:#2a2a2a;font-weight:normal;word-spacing:0px;transform:scaleX(0.7953);transform-origin:left center;">20306 1…</div>
<div style="position:absolute;left:520px;top:260.35px;width:8px;height:10px;background:#fff;border:1px solid #7a8ca8"></div>
<div style="position:absolute;left:522px;top:264.35px;width:5px;height:5px;background:#3b78c4;"></div>
<div class="t" style="left:530.50px;top:259.35px;font-size:9px;line-height:13px;color:#2a2a2a;font-weight:normal;word-spacing:0px;transform:scaleX(0.9000);transform-origin:left center;">default_page.png</div>
<div class="t" style="left:710.47px;top:259.35px;font-size:9px;line-height:13px;color:#2a2a2a;font-weight:normal;word-spacing:0px;transform:scaleX(0.8600);transform-origin:right center;">6,633</div>
<div class="t" style="left:739.80px;top:259.35px;font-size:9px;line-height:13px;color:#2a2a2a;font-weight:normal;word-spacing:2px;transform:scaleX(0.6966);transform-origin:left center;">PNG <span style="letter-spacing:-1.60px">ファ</span>…</div>
<div class="t" style="left:782.20px;top:259.35px;font-size:9px;line-height:13px;color:#2a2a2a;font-weight:normal;word-spacing:0px;transform:scaleX(0.8656);transform-origin:left center;">2019/07/08 21:19:35</div>
<div class="t" style="left:881.40px;top:259.35px;font-size:9px;line-height:13px;color:#2a2a2a;font-weight:normal;word-spacing:0px;transform:scaleX(0.8196);transform-origin:left center;">adfrw (0…</div>
<div class="t" style="left:923.80px;top:259.35px;font-size:9px;line-height:13px;color:#2a2a2a;font-weight:normal;word-spacing:0px;transform:scaleX(0.7953);transform-origin:left center;">20306 1…</div>
<svg style="position:absolute;left:517.8px;top:271.40000000000003px;filter:blur(0.25px)" width="13" height="13" viewBox="0 0 13 13"><circle cx="6" cy="7.6" r="4.9" fill="#cbb684" stroke="#8f7f58" stroke-width="0.7"/><path d="M3 6.5Q6 4.5 8.5 7Q6 11 3.5 9Z" fill="#eee2bf"/><path d="M3.5 8.5L5.5 10.5" stroke="#6f6048" stroke-width="0.8"/><path d="M7 8L11 3.4" stroke="#2a4ed0" stroke-width="3.2" stroke-linecap="round"/><path d="M10.2 2L12.8 0.8L12.2 3.6Z" fill="#1b2f86"/></svg>
<div class="t" style="left:530.50px;top:272.10px;font-size:9px;line-height:13px;color:#2a2a2a;font-weight:normal;word-spacing:0px;transform:scaleX(0.9000);transform-origin:left center;">index.php</div>
<div class="t" style="left:717.97px;top:272.10px;font-size:9px;line-height:13px;color:#2a2a2a;font-weight:normal;word-spacing:0px;transform:scaleX(0.8600);transform-origin:right center;">420</div>
<div class="t" style="left:739.80px;top:272.10px;font-size:9px;line-height:13px;color:#2a2a2a;font-weight:normal;word-spacing:2px;transform:scaleX(0.6978);transform-origin:left center;">PHP <span style="letter-spacing:-1.60px">ファ</span>…</div>
<div class="t" style="left:782.20px;top:272.10px;font-size:9px;line-height:13px;color:#2a2a2a;font-weight:normal;word-spacing:0px;transform:scaleX(0.8656);transform-origin:left center;">2019/05/08 10:01:10</div>
<div class="t" style="left:881.40px;top:272.10px;font-size:9px;line-height:13px;color:#2a2a2a;font-weight:normal;word-spacing:0px;transform:scaleX(0.8196);transform-origin:left center;">adfrw (0…</div>
<div class="t" style="left:923.80px;top:272.10px;font-size:9px;line-height:13px;color:#2a2a2a;font-weight:normal;word-spacing:0px;transform:scaleX(0.7953);transform-origin:left center;">20306 1…</div>
<svg style="position:absolute;left:517.8px;top:284.15000000000003px;filter:blur(0.25px)" width="13" height="13" viewBox="0 0 13 13"><circle cx="6" cy="7.6" r="4.9" fill="#cbb684" stroke="#8f7f58" stroke-width="0.7"/><path d="M3 6.5Q6 4.5 8.5 7Q6 11 3.5 9Z" fill="#eee2bf"/><path d="M3.5 8.5L5.5 10.5" stroke="#6f6048" stroke-width="0.8"/><path d="M7 8L11 3.4" stroke="#2a4ed0" stroke-width="3.2" stroke-linecap="round"/><path d="M10.2 2L12.8 0.8L12.2 3.6Z" fill="#1b2f86"/></svg>
<div class="t" style="left:530.50px;top:284.85px;font-size:9px;line-height:13px;color:#2a2a2a;font-weight:normal;word-spacing:0px;transform:scaleX(0.9000);transform-origin:left center;">license.txt</div>
<div class="t" style="left:705.47px;top:284.85px;font-size:9px;line-height:13px;color:#2a2a2a;font-weight:normal;word-spacing:0px;transform:scaleX(0.8600);transform-origin:right center;">19,935</div>
<div class="t" style="left:739.80px;top:284.85px;font-size:9px;line-height:13px;color:#2a2a2a;font-weight:normal;word-spacing:2px;transform:scaleX(0.7051);transform-origin:left center;">TXT <span style="letter-spacing:-1.60px">ファイ</span>…</div>
<div class="t" style="left:782.20px;top:284.85px;font-size:9px;line-height:13px;color:#2a2a2a;font-weight:normal;word-spacing:0px;transform:scaleX(0.8656);transform-origin:left center;">2019/05/08 10:01:10</div>
<div class="t" style="left:881.40px;top:284.85px;font-size:9px;line-height:13px;color:#2a2a2a;font-weight:normal;word-spacing:0px;transform:scaleX(0.8196);transform-origin:left center;">adfrw (0…</div>
<div class="t" style="left:923.80px;top:284.85px;font-size:9px;line-height:13px;color:#2a2a2a;font-weight:normal;word-spacing:0px;transform:scaleX(0.7953);transform-origin:left center;">20306 1…</div>
<svg style="position:absolute;left:518.8px;top:298.8px" width="11" height="11" viewBox="0 0 11 11"><circle cx="5.5" cy="5.5" r="5.2" fill="#db4437"/><path d="M5.5 5.5L0.8 3.2A5.2 5.2 0 0 0 4.2 10.5Z" fill="#0f9d58"/><path d="M5.5 5.5L4.2 10.5A5.2 5.2 0 0 0 10.4 3.6Z" fill="#f4b400"/><circle cx="5.5" cy="5.5" r="2.4" fill="#fff"/><circle cx="5.5" cy="5.5" r="1.8" fill="#4285f4"/></svg>
<div class="t" style="left:530.50px;top:297.60px;font-size:9px;line-height:13px;color:#2a2a2a;font-weight:normal;word-spacing:0px;transform:scaleX(0.9000);transform-origin:left center;">readme.html</div>
<div class="t" style="left:705.47px;top:297.60px;font-size:9px;line-height:13px;color:#2a2a2a;font-weight:normal;word-spacing:0px;transform:scaleX(0.8600);transform-origin:right center;">10,319</div>
<div class="t" style="left:739.80px;top:297.60px;font-size:9px;line-height:13px;color:#2a2a2a;font-weight:normal;word-spacing:0px;transform:scaleX(0.8067);transform-origin:left center;">Chrome …</div>
<div class="t" style="left:782.20px;top:297.60px;font-size:9px;line-height:13px;color:#2a2a2a;font-weight:normal;word-spacing:0px;transform:scaleX(0.8656);transform-origin:left center;">2019/05/08 10:01:10</div>
<div class="t" style="left:881.40px;top:297.60px;font-size:9px;line-height:13px;color:#2a2a2a;font-weight:normal;word-spacing:0px;transform:scaleX(0.8196);transform-origin:left center;">adfrw (0…</div>
<div class="t" style="left:923.80px;top:297.60px;font-size:9px;line-height:13px;color:#2a2a2a;font-weight:normal;word-spacing:0px;transform:scaleX(0.7953);transform-origin:left center;">20306 1…</div>
<svg style="position:absolute;left:517.8px;top:309.65000000000003px;filter:blur(0.25px)" width="13" height="13" viewBox="0 0 13 13"><circle cx="6" cy="7.6" r="4.9" fill="#cbb684" stroke="#8f7f58" stroke-width="0.7"/><path d="M3 6.5Q6 4.5 8.5 7Q6 11 3.5 9Z" fill="#eee2bf"/><path d="M3.5 8.5L5.5 10.5" stroke="#6f6048" stroke-width="0.8"/><path d="M7 8L11 3.4" stroke="#2a4ed0" stroke-width="3.2" stroke-linecap="round"/><path d="M10.2 2L12.8 0.8L12.2 3.6Z" fill="#1b2f86"/></svg>
<div class="t" style="left:530.50px;top:310.35px;font-size:9px;line-height:13px;color:#2a2a2a;font-weight:normal;word-spacing:0px;transform:scaleX(0.9000);transform-origin:left center;">wp-activate.php</div>
<div class="t" style="left:710.47px;top:310.35px;font-size:9px;line-height:13px;color:#2a2a2a;font-weight:normal;word-spacing:0px;transform:scaleX(0.8600);transform-origin:right center;">6,919</div>
<div class="t" style="left:739.80px;top:310.35px;font-size:9px;line-height:13px;color:#2a2a2a;font-weight:normal;word-spacing:2px;transform:scaleX(0.6978);transform-origin:left center;">PHP <span style="letter-spacing:-1.60px">ファ</span>…</div>
<div class="t" style="left:782.20px;top:310.35px;font-size:9px;line-height:13px;color:#2a2a2a;font-weight:normal;word-spacing:0px;transform:scaleX(0.8656);transform-origin:left center;">2019/05/08 10:01:10</div>
<div class="t" style="left:881.40px;top:310.35px;font-size:9px;line-height:13px;color:#2a2a2a;font-weight:normal;word-spacing:0px;transform:scaleX(0.8196);transform-origin:left center;">adfrw (0…</div>
<div class="t" style="left:923.80px;top:310.35px;font-size:9px;line-height:13px;color:#2a2a2a;font-weight:normal;word-spacing:0px;transform:scaleX(0.7953);transform-origin:left center;">20306 1…</div>
<svg style="position:absolute;left:517.8px;top:322.40000000000003px;filter:blur(0.25px)" width="13" height="13" viewBox="0 0 13 13"><circle cx="6" cy="7.6" r="4.9" fill="#cbb684" stroke="#8f7f58" stroke-width="0.7"/><path d="M3 6.5Q6 4.5 8.5 7Q6 11 3.5 9Z" fill="#eee2bf"/><path d="M3.5 8.5L5.5 10.5" stroke="#6f6048" stroke-width="0.8"/><path d="M7 8L11 3.4" stroke="#2a4ed0" stroke-width="3.2" stroke-linecap="round"/><path d="M10.2 2L12.8 0.8L12.2 3.6Z" fill="#1b2f86"/></svg>
<div class="t" style="left:530.50px;top:323.10px;font-size:9px;line-height:13px;color:#2a2a2a;font-weight:normal;word-spacing:0px;transform:scaleX(0.9000);transform-origin:left center;">wp-blog-header.php</div>
<div class="t" style="left:717.97px;top:323.10px;font-size:9px;line-height:13px;color:#2a2a2a;font-weight:normal;word-spacing:0px;transform:scaleX(0.8600);transform-origin:right center;">369</div>
<div class="t" style="left:739.80px;top:323.10px;font-size:9px;line-height:13px;color:#2a2a2a;font-weight:normal;word-spacing:2px;transform:scaleX(0.6978);transform-origin:left center;">PHP <span style="letter-spacing:-1.60px">ファ</span>…</div>
<div class="t" style="left:782.20px;top:323.10px;font-size:9px;line-height:13px;color:#2a2a2a;font-weight:normal;word-spacing:0px;transform:scaleX(0.8656);transform-origin:left center;">2019/05/08 10:01:10</div>
<div class="t" style="left:881.40px;top:323.10px;font-size:9px;line-height:13px;color:#2a2a2a;font-weight:normal;word-spacing:0px;transform:scaleX(0.8196);transform-origin:left center;">adfrw (0…</div>
<div class="t" style="left:923.80px;top:323.10px;font-size:9px;line-height:13px;color:#2a2a2a;font-weight:normal;word-spacing:0px;transform:scaleX(0.7953);transform-origin:left center;">20306 1…</div>
<svg style="position:absolute;left:517.8px;top:335.15000000000003px;filter:blur(0.25px)" width="13" height="13" viewBox="0 0 13 13"><circle cx="6" cy="7.6" r="4.9" fill="#cbb684" stroke="#8f7f58" stroke-width="0.7"/><path d="M3 6.5Q6 4.5 8.5 7Q6 11 3.5 9Z" fill="#eee2bf"/><path d="M3.5 8.5L5.5 10.5" stroke="#6f6048" stroke-width="0.8"/><path d="M7 8L11 3.4" stroke="#2a4ed0" stroke-width="3.2" stroke-linecap="round"/><path d="M10.2 2L12.8 0.8L12.2 3.6Z" fill="#1b2f86"/></svg>
<div class="t" style="left:530.50px;top:335.85px;font-size:9px;line-height:13px;color:#2a2a2a;font-weight:normal;word-spacing:0px;transform:scaleX(0.9000);transform-origin:left center;">wp-comments-post.php</div>
<div class="t" style="left:710.47px;top:335.85px;font-size:9px;line-height:13px;color:#2a2a2a;font-weight:normal;word-spacing:0px;transform:scaleX(0.8600);transform-origin:right center;">2,283</div>
<div class="t" style="left:739.80px;top:335.85px;font-size:9px;line-height:13px;color:#2a2a2a;font-weight:normal;word-spacing:2px;transform:scaleX(0.6978);transform-origin:left center;">PHP <span style="letter-spacing:-1.60px">ファ</span>…</div>
<div class="t" style="left:782.20px;top:335.85px;font-size:9px;line-height:13px;color:#2a2a2a;font-weight:normal;word-spacing:0px;transform:scaleX(0.8656);transform-origin:left center;">2019/05/08 10:01:10</div>
<div class="t" style="left:881.40px;top:335.85px;font-size:9px;line-height:13px;color:#2a2a2a;font-weight:normal;word-spacing:0px;transform:scaleX(0.8196);transform-origin:left center;">adfrw (0…</div>
<div class="t" style="left:923.80px;top:335.85px;font-size:9px;line-height:13px;color:#2a2a2a;font-weight:normal;word-spacing:0px;transform:scaleX(0.7953);transform-origin:left center;">20306 1…</div>
<svg style="position:absolute;left:517.8px;top:347.90000000000003px;filter:blur(0.25px)" width="13" height="13" viewBox="0 0 13 13"><circle cx="6" cy="7.6" r="4.9" fill="#cbb684" stroke="#8f7f58" stroke-width="0.7"/><path d="M3 6.5Q6 4.5 8.5 7Q6 11 3.5 9Z" fill="#eee2bf"/><path d="M3.5 8.5L5.5 10.5" stroke="#6f6048" stroke-width="0.8"/><path d="M7 8L11 3.4" stroke="#2a4ed0" stroke-width="3.2" stroke-linecap="round"/><path d="M10.2 2L12.8 0.8L12.2 3.6Z" fill="#1b2f86"/></svg>
<div class="t" style="left:530.50px;top:348.60px;font-size:9px;line-height:13px;color:#2a2a2a;font-weight:normal;word-spacing:0px;transform:scaleX(0.9000);transform-origin:left center;">wp-config-sample.php</div>
<div class="t" style="left:710.47px;top:348.60px;font-size:9px;line-height:13px;color:#2a2a2a;font-weight:normal;word-spacing:0px;transform:scaleX(0.8600);transform-origin:right center;">3,898</div>
<div class="t" style="left:739.80px;top:348.60px;font-size:9px;line-height:13px;color:#2a2a2a;font-weight:normal;word-spacing:2px;transform:scaleX(0.6978);transform-origin:left center;">PHP <span style="letter-spacing:-1.60px">ファ</span>…</div>
<div class="t" style="left:782.20px;top:348.60px;font-size:9px;line-height:13px;color:#2a2a2a;font-weight:normal;word-spacing:0px;transform:scaleX(0.8656);transform-origin:left center;">2019/05/08 10:01:10</div>
<div class="t" style="left:881.40px;top:348.60px;font-size:9px;line-height:13px;color:#2a2a2a;font-weight:normal;word-spacing:0px;transform:scaleX(0.8196);transform-origin:left center;">adfrw (0…</div>
<div class="t" style="left:923.80px;top:348.60px;font-size:9px;line-height:13px;color:#2a2a2a;font-weight:normal;word-spacing:0px;transform:scaleX(0.7953);transform-origin:left center;">20306 1…</div>
<div style="position:absolute;left:502px;top:180px;width:11px;height:174px;background:#f0f0f0;"></div>
<div style="position:absolute;left:502.5px;top:192.2px;width:9px;height:80px;background:#cdcdcd;"></div>
<svg style="position:absolute;left:0;top:0" width="1024" height="546"><path d="M504.59999999999997 187.20000000000002L507.2 184.60000000000002L509.8 187.20000000000002" stroke="#606060" fill="none" stroke-width="1.6"/></svg>
<svg style="position:absolute;left:0;top:0" width="1024" height="546"><path d="M504.59999999999997 346.70000000000005L507.2 349.3L509.8 346.70000000000005" stroke="#606060" fill="none" stroke-width="1.6"/></svg>
<div style="position:absolute;left:1014px;top:180px;width:10px;height:174px;background:#f0f0f0;"></div>
<div style="position:absolute;left:1015px;top:192.2px;width:9px;height:78.3px;background:#cdcdcd;"></div>
<svg style="position:absolute;left:0;top:0" width="1024" height="546"><path d="M1016.9 187.4L1019.5 184.8L1022.1 187.4" stroke="#606060" fill="none" stroke-width="1.6"/></svg>
<svg style="position:absolute;left:0;top:0" width="1024" height="546"><path d="M1016.9 346.70000000000005L1019.5 349.3L1022.1 346.70000000000005" stroke="#606060" fill="none" stroke-width="1.6"/></svg>
<div style="position:absolute;left:0px;top:354px;width:1024px;height:15.5px;background:#f0f0f0;"></div>
<div class="t" style="left:3.00px;top:356.50px;font-size:9px;line-height:13px;color:#2a2a2a;font-weight:normal;word-spacing:2px;transform:scaleX(0.7765);transform-origin:left center;">18 個<span style="letter-spacing:-1.60px">のファイルと</span> 3 個<span style="letter-spacing:-1.60px">のディレクトリ</span> 合計<span style="letter-spacing:-1.60px">サイズ</span>: 167,211 <span style="letter-spacing:-1.60px">バイト</span></div>
<div class="t" style="left:517.00px;top:356.50px;font-size:9px;line-height:13px;color:#2a2a2a;font-weight:normal;word-spacing:2px;transform:scaleX(0.7767);transform-origin:left center;">19 個<span style="letter-spacing:-1.60px">のファイルと</span> 3 個<span style="letter-spacing:-1.60px">のディレクトリ</span> 合計<span style="letter-spacing:-1.60px">サイズ</span>: 170,584 <span style="letter-spacing:-1.60px">バイト</span></div>
<div style="position:absolute;left:0px;top:369.5px;width:1024px;height:2px;background:#e6e6e6;"></div>
<div style="position:absolute;left:0px;top:371.5px;width:1024px;height:1px;background:#b4b4b4;"></div>
<div style="position:absolute;left:0px;top:124px;width:1px;height:246px;background:#9a9a9a;"></div>
<div style="position:absolute;left:515px;top:124px;width:1.2px;height:246px;background:#9a9a9a;"></div>
<div style="position:absolute;left:0px;top:372.5px;width:1024px;height:145px;background:#ffffff;"></div>
<div style="position:absolute;left:96px;top:373px;width:1px;height:15px;background:#ececec;"></div>
<div style="position:absolute;left:127px;top:373px;width:1px;height:15px;background:#ececec;"></div>
<div style="position:absolute;left:226px;top:373px;width:1px;height:15px;background:#ececec;"></div>
<div style="position:absolute;left:268px;top:373px;width:1px;height:15px;background:#ececec;"></div>
<div style="position:absolute;left:301px;top:373px;width:1px;height:15px;background:#ececec;"></div>
<div style="position:absolute;left:380px;top:373px;width:1px;height:15px;background:#ececec;"></div>
<div class="t" style="left:4.00px;top:374.50px;font-size:9px;line-height:13px;color:#2a2a2a;font-weight:normal;word-spacing:2px;transform:scaleX(0.7561);transform-origin:left center;"><span style="letter-spacing:-1.60px">サーバー</span>/<span style="letter-spacing:-1.60px">ローカル</span> <span style="letter-spacing:-1.60px">ファイル</span></div>
<div class="t" style="left:106.00px;top:374.50px;font-size:9px;line-height:13px;color:#2a2a2a;font-weight:normal;word-spacing:2px;transform:scaleX(0.8660);transform-origin:left center;">方向</div>
<div class="t" style="left:132.00px;top:374.50px;font-size:9px;line-height:13px;color:#2a2a2a;font-weight:normal;word-spacing:2px;transform:scaleX(0.7491);transform-origin:left center;"><span style="letter-spacing:-1.60px">リモート</span> <span style="letter-spacing:-1.60px">ファイル</span></div>
<div class="t" style="left:241.80px;top:374.50px;font-size:9px;line-height:13px;color:#2a2a2a;font-weight:normal;word-spacing:2px;transform:scaleX(0.7625);transform-origin:right center;"><span style="letter-spacing:-1.60px">サイズ</span></div>
<div class="t" style="left:271.00px;top:374.50px;font-size:9px;line-height:13px;color:#2a2a2a;font-weight:normal;word-spacing:2px;transform:scaleX(0.8660);transform-origin:left center;">優先度</div>
<div class="t" style="left:304.00px;top:374.50px;font-size:9px;line-height:13px;color:#2a2a2a;font-weight:normal;word-spacing:2px;transform:scaleX(0.8660);transform-origin:left center;">状態</div>
<div style="position:absolute;left:0px;top:517.8px;width:1024px;height:1.2px;background:#a6a6a6;"></div>
<div style="position:absolute;left:0px;top:519px;width:1024px;height:1px;background:#e4e4e4;"></div>
<div style="position:absolute;left:0;top:520px;width:1024px;height:13px;background:linear-gradient(#c6c6c6,#ebebeb)"></div>
<div style="position:absolute;left:1.8px;top:519px;width:49.2px;height:14px;background:#f9f9f9;border:1px solid #d0d0d0;border-top:none;box-sizing:border-box"></div>
<div style="position:absolute;left:52.7px;top:520px;width:53.6px;height:13px;background:#e9e9e9;border:1px solid #d6d6d6;box-sizing:border-box"></div>
<div style="position:absolute;left:107.2px;top:520px;width:52.8px;height:13px;background:#e9e9e9;border:1px solid #d6d6d6;box-sizing:border-box"></div>
<div class="t" style="left:7.00px;top:519.50px;font-size:9px;line-height:13px;color:#111;font-weight:bold;word-spacing:2px;transform:scaleX(0.7332);transform-origin:left center;"><span style="letter-spacing:-1.60px">キュー</span> <span style="letter-spacing:-1.60px">ファイル</span></div>
<div class="t" style="left:58.90px;top:519.50px;font-size:9px;line-height:13px;color:#333;font-weight:normal;word-spacing:2px;transform:scaleX(0.8462);transform-origin:left center;">失敗<span style="letter-spacing:-1.60px">した</span>転送</div>
<div class="t" style="left:111.60px;top:519.50px;font-size:9px;line-height:13px;color:#333;font-weight:normal;word-spacing:2px;transform:scaleX(0.8640);transform-origin:left center;">成功<span style="letter-spacing:-1.60px">した</span>転送</div>
<div style="position:absolute;left:0px;top:533px;width:1024px;height:13px;background:#efefef;"></div>
<div class="t" style="left:1.00px;top:536.30px;font-size:9px;line-height:13px;color:#2a2a2a;font-weight:normal;word-spacing:2px;transform:scaleX(0.8301);transform-origin:left center;">転送<span style="letter-spacing:-1.60px">キューの</span>処理<span style="letter-spacing:-1.60px">を</span>切<span style="letter-spacing:-1.60px">り</span>替<span style="letter-spacing:-1.60px">える</span></div>
<svg style="position:absolute;left:2px;top:29px;filter:blur(0.3px)" width="15" height="14" viewBox="0 0 15 14"><rect x="1.5" y="1.5" width="3.5" height="2" fill="#9aa0a0"/><rect x="6" y="2.5" width="3.5" height="2" fill="#8a9298"/><rect x="10.5" y="1.5" width="3.5" height="2" fill="#9aa0a0"/><rect x="2" y="3.5" width="2.5" height="6" fill="#e4ebe2"/><rect x="6.5" y="4.5" width="2.5" height="5" fill="#e4ebe2"/><rect x="11" y="3.5" width="2.5" height="6" fill="#e4ebe2"/><rect x="1" y="9" width="13.5" height="2" fill="#c5d3bf"/><rect x="1" y="11" width="13.5" height="2" fill="#8c8c8c"/></svg>
<svg style="position:absolute;left:20.5px;top:34.5px;filter:blur(0.3px)" width="6" height="4" viewBox="0 0 6 4"><path d="M0.5 0.5H5.5L3 3.2Z" fill="#111"/></svg>
<div style="position:absolute;left:29px;top:29px;width:1px;height:14px;background:#d0d0d0;"></div>
<div style="position:absolute;left:32px;top:28px;width:70px;height:16px;background:#d3e7f7;"></div>
<svg style="position:absolute;left:36px;top:30px;filter:blur(0.3px)" width="10" height="13" viewBox="0 0 10 13"><path d="M1.5 1.5H7L8.5 3V11.5H1.5Z" fill="#c9d6d8" stroke="#9fb2b8" stroke-width="0.8"/><rect x="2.5" y="2.5" width="3" height="8" fill="#8fb0bb"/><rect x="5.5" y="3" width="2" height="7.5" fill="#dfe7e0"/></svg>
<svg style="position:absolute;left:51px;top:30px;filter:blur(0.3px)" width="14" height="12" viewBox="0 0 14 12"><rect x="0" y="1" width="13" height="10" fill="#f7f7f7"/><rect x="0" y="1" width="6" height="3.2" fill="#46b53a"/><rect x="6" y="1" width="7" height="2.5" fill="#6d6d6d"/><rect x="0" y="4.2" width="6" height="6" fill="#e2f2cf"/><rect x="7" y="4.5" width="6" height="6" fill="#f6e8e8"/></svg>
<svg style="position:absolute;left:68px;top:30px;filter:blur(0.3px)" width="14" height="12" viewBox="0 0 14 12"><rect x="0" y="1" width="13" height="10" fill="#f7f7f7"/><rect x="0" y="1" width="6" height="2.5" fill="#7a7a7a"/><rect x="6" y="1" width="7" height="3.5" fill="#2f5d9e"/><rect x="1" y="5.5" width="10" height="1" fill="#e4e4e4"/><rect x="1" y="8" width="10" height="1" fill="#e4e4e4"/></svg>
<svg style="position:absolute;left:85px;top:30px;filter:blur(0.3px)" width="14" height="12" viewBox="0 0 14 12"><rect x="0.5" y="2.2" width="10" height="2.6" fill="#3fb14a"/><path d="M9.5 0.8L13.5 3.5L9.5 6.2Z" fill="#3fb14a"/><rect x="3" y="8.3" width="10" height="2.6" fill="#2566b5"/><path d="M4 6.9L0 9.6L4 12.3Z" fill="#2566b5"/></svg>
<svg style="position:absolute;left:105px;top:29px;filter:blur(0.3px)" width="15" height="15" viewBox="0 0 15 15"><path d="M2.5 6.5A5 5 0 0 1 11.5 4" stroke="#2f7ac6" stroke-width="2.6" fill="none"/><path d="M9.5 1L14 2.5L12 7Z" fill="#2f7ac6"/><path d="M12.5 8.5A5 5 0 0 1 3.5 11" stroke="#3fb338" stroke-width="2.6" fill="none"/><path d="M5.5 14L1 12.5L3 8Z" fill="#3fb338"/></svg>
<svg style="position:absolute;left:124px;top:29px;filter:blur(0.3px)" width="13" height="15" viewBox="0 0 13 15"><rect x="1" y="1" width="2" height="12" fill="#47a93b"/><rect x="4" y="1" width="2" height="12" fill="#2f74c0"/><circle cx="10" cy="4" r="1.6" fill="none" stroke="#888" stroke-width="1"/><circle cx="10" cy="9" r="1.6" fill="none" stroke="#888" stroke-width="1"/></svg>
<svg style="position:absolute;left:140px;top:30px;filter:blur(0.3px)" width="14" height="13" viewBox="0 0 14 13"><circle cx="7" cy="6.5" r="6.2" fill="#333"/><path d="M4.5 4L9.5 9M9.5 4L4.5 9" stroke="#fff" stroke-width="1.8"/></svg>
<svg style="position:absolute;left:159px;top:30px;filter:blur(0.3px)" width="13" height="13" viewBox="0 0 13 13"><rect x="1" y="0.5" width="5" height="3" fill="#7aa6d6"/><rect x="3" y="3.5" width="1" height="5" fill="#9ab"/><path d="M6 7L11 12M11 7L6 12" stroke="#d0202a" stroke-width="2"/></svg>
<svg style="position:absolute;left:176px;top:30px;filter:blur(0.3px)" width="13" height="13" viewBox="0 0 13 13"><rect x="1" y="0.5" width="5" height="3" fill="#c8c8c8"/><rect x="3" y="3.5" width="1" height="5" fill="#aaa"/><path d="M5.5 9L7.5 11L12 6" stroke="#444" stroke-width="1.6" fill="none"/></svg>
<div style="position:absolute;left:191.5px;top:29px;width:1px;height:14px;background:#d0d0d0;"></div>
<svg style="position:absolute;left:196px;top:31px;filter:blur(0.3px)" width="13" height="10" viewBox="0 0 13 10"><rect x="0" y="0.5" width="13" height="2.2" fill="#4c5d7c"/><rect x="0" y="2.7" width="13" height="6" fill="#eef3ea"/><rect x="1" y="4" width="11" height="1.3" fill="#7cbf5c"/><rect x="1" y="6.6" width="11" height="1.3" fill="#7cbf5c"/><rect x="4.2" y="2.7" width="1.2" height="6" fill="#6b6b6b"/><rect x="0.5" y="3" width="2.5" height="5.5" fill="#f3e3c0"/></svg>
<svg style="position:absolute;left:214px;top:30px;filter:blur(0.3px)" width="13" height="14" viewBox="0 0 13 14"><circle cx="6" cy="5.8" r="4" fill="#f2f2ee" stroke="#5a5a5a" stroke-width="1.3"/><path d="M8.8 8.8L12 12.2" stroke="#333" stroke-width="1.9"/><path d="M7 1L9 0.8" stroke="#c8b060" stroke-width="1"/></svg>
<svg style="position:absolute;left:231.5px;top:32px;filter:blur(0.3px)" width="11" height="10" viewBox="0 0 11 10"><ellipse cx="5.3" cy="4.5" rx="4.8" ry="4.2" fill="#f0c020"/><path d="M0.5 4.5A4.8 4.2 0 0 1 10.1 4.5Z" fill="#3fae3f"/><ellipse cx="5.3" cy="4.6" rx="2.2" ry="1.8" fill="#b8e0a0"/><path d="M1 6.5Q5 9.5 9.6 6.5" stroke="#e08a20" stroke-width="1" fill="none"/></svg>
<svg style="position:absolute;left:247.5px;top:30.5px;filter:blur(0.3px)" width="14" height="12" viewBox="0 0 14 12"><path d="M1 11V6L3 1.5H6V11Z" fill="#4a4236"/><path d="M13 11V6L11 1.5H8V11Z" fill="#4a4236"/><rect x="5.5" y="4" width="3" height="4" fill="#3a342a"/><circle cx="4" cy="8.5" r="2.4" fill="#f0d018"/><circle cx="10" cy="8.5" r="2.4" fill="#f0d018"/></svg>
<svg style="position:absolute;left:888px;top:537px;filter:blur(0.3px)" width="12" height="10" viewBox="0 0 12 10"><path d="M3 5V3.8A3 3 0 0 1 9 3.8V5" stroke="#555" stroke-width="1.5" fill="none"/><rect x="1.5" y="5" width="9" height="5" fill="#f2b21b"/></svg>
<svg style="position:absolute;left:901.5px;top:537.5px;filter:blur(0.3px)" width="10" height="9" viewBox="0 0 10 9"><circle cx="5" cy="5" r="4.2" fill="#bfbfbf" stroke="#555" stroke-width="1.2"/><circle cx="5" cy="5" r="2" fill="#52b848"/></svg>
<svg style="position:absolute;left:912.8px;top:537.5px;filter:blur(0.3px)" width="11" height="9" viewBox="0 0 11 9"><circle cx="5.2" cy="5.2" r="4.3" fill="#e4e4e4" stroke="#7a7a7a" stroke-width="1.4"/></svg>
<div class="t" style="left:928.10px;top:537.00px;font-size:9px;line-height:13px;color:#2a2a2a;font-weight:normal;word-spacing:2px;transform:scaleX(0.7835);transform-origin:left center;"><span style="letter-spacing:-1.60px">キュー</span>: <span style="letter-spacing:-1.60px">なし</span></div>
<svg style="position:absolute;left:1006.3px;top:538.5px;filter:blur(0.3px)" width="8" height="8" viewBox="0 0 8 8"><circle cx="3.8" cy="4" r="3.6" fill="#2e8b36"/></svg>
<svg style="position:absolute;left:1016px;top:538.5px;filter:blur(0.3px)" width="8" height="8" viewBox="0 0 8 8"><circle cx="4" cy="4" r="3.6" fill="#8d1f22"/></svg>
<div style="position:absolute;left:0;top:0;width:1024px;height:546px;filter:drop-shadow(1px 1.5px 1.2px rgba(0,0,0,0.45))">
<div style="position:absolute;left:361.56px;top:186.25px;width:100px;height:60px;padding-left:30px;box-sizing:border-box;font-family:'Liberation Sans',sans-serif;font-weight:normal;font-size:40px;line-height:60px;white-space:pre;-webkit-text-stroke:8px #fff;color:#fff;transform:scale(0.7800,1.0031);transform-origin:30px 0">ア</div>
<div style="position:absolute;left:393.89px;top:190.62px;width:100px;height:60px;padding-left:30px;box-sizing:border-box;font-family:'Liberation Sans',sans-serif;font-weight:normal;font-size:40px;line-height:60px;white-space:pre;-webkit-text-stroke:8px #fff;color:#fff;transform:scale(0.7026,0.8875);transform-origin:30px 0">プ</div>
<div style="position:absolute;left:423.23px;top:185.17px;width:100px;height:60px;padding-left:30px;box-sizing:border-box;font-family:'Liberation Sans',sans-serif;font-weight:normal;font-size:40px;line-height:60px;white-space:pre;-webkit-text-stroke:8px #fff;color:#fff;transform:scale(0.8962,1.0630);transform-origin:30px 0">ロ</div>
<div style="position:absolute;left:455.66px;top:198.53px;width:100px;height:60px;padding-left:30px;box-sizing:border-box;font-family:'Liberation Sans',sans-serif;font-weight:normal;font-size:40px;line-height:60px;white-space:pre;-webkit-text-stroke:8px #fff;color:#fff;transform:scale(0.8471,0.6353);transform-origin:30px 0">ー</div>
<div style="position:absolute;left:488.24px;top:186.62px;width:100px;height:60px;padding-left:30px;box-sizing:border-box;font-family:'Liberation Sans',sans-serif;font-weight:normal;font-size:40px;line-height:60px;white-space:pre;-webkit-text-stroke:8px #fff;color:#fff;transform:scale(0.8545,0.9556);transform-origin:30px 0">ド</div>
<div style="position:absolute;left:524.40px;top:186.83px;width:100px;height:60px;padding-left:30px;box-sizing:border-box;font-family:'Liberation Sans',sans-serif;font-weight:normal;font-size:40px;line-height:60px;white-space:pre;-webkit-text-stroke:8px #fff;color:#fff;transform:scale(0.8184,0.9359);transform-origin:30px 0">す</div>
<div style="position:absolute;left:556.44px;top:188.21px;width:100px;height:60px;padding-left:30px;box-sizing:border-box;font-family:'Liberation Sans',sans-serif;font-weight:normal;font-size:40px;line-height:60px;white-space:pre;-webkit-text-stroke:8px #fff;color:#fff;transform:scale(0.8406,0.9139);transform-origin:30px 0">る</div>
</div>
<div style="position:absolute;left:361.56px;top:186.25px;width:100px;height:60px;padding-left:30px;box-sizing:border-box;font-family:'Liberation Sans',sans-serif;font-weight:normal;font-size:40px;line-height:60px;white-space:pre;-webkit-text-stroke:2.0px #e6185c;color:#e6185c;transform:scale(0.7800,1.0031);transform-origin:30px 0">ア</div>
<div style="position:absolute;left:393.89px;top:190.62px;width:100px;height:60px;padding-left:30px;box-sizing:border-box;font-family:'Liberation Sans',sans-serif;font-weight:normal;font-size:40px;line-height:60px;white-space:pre;-webkit-text-stroke:2.0px #e6185c;color:#e6185c;transform:scale(0.7026,0.8875);transform-origin:30px 0">プ</div>
<div style="position:absolute;left:423.23px;top:185.17px;width:100px;height:60px;padding-left:30px;box-sizing:border-box;font-family:'Liberation Sans',sans-serif;font-weight:normal;font-size:40px;line-height:60px;white-space:pre;-webkit-text-stroke:2.0px #e6185c;color:#e6185c;transform:scale(0.8962,1.0630);transform-origin:30px 0">ロ</div>
<div style="position:absolute;left:455.66px;top:198.53px;width:100px;height:60px;padding-left:30px;box-sizing:border-box;font-family:'Liberation Sans',sans-serif;font-weight:normal;font-size:40px;line-height:60px;white-space:pre;-webkit-text-stroke:2.0px #e6185c;color:#e6185c;transform:scale(0.8471,0.6353);transform-origin:30px 0">ー</div>
<div style="position:absolute;left:488.24px;top:186.62px;width:100px;height:60px;padding-left:30px;box-sizing:border-box;font-family:'Liberation Sans',sans-serif;font-weight:normal;font-size:40px;line-height:60px;white-space:pre;-webkit-text-stroke:2.0px #e6185c;color:#e6185c;transform:scale(0.8545,0.9556);transform-origin:30px 0">ド</div>
<div style="position:absolute;left:524.40px;top:186.83px;width:100px;height:60px;padding-left:30px;box-sizing:border-box;font-family:'Liberation Sans',sans-serif;font-weight:normal;font-size:40px;line-height:60px;white-space:pre;-webkit-text-stroke:2.0px #e6185c;color:#e6185c;transform:scale(0.8184,0.9359);transform-origin:30px 0">す</div>
<div style="position:absolute;left:556.44px;top:188.21px;width:100px;height:60px;padding-left:30px;box-sizing:border-box;font-family:'Liberation Sans',sans-serif;font-weight:normal;font-size:40px;line-height:60px;white-space:pre;-webkit-text-stroke:2.0px #e6185c;color:#e6185c;transform:scale(0.8406,0.9139);transform-origin:30px 0">る</div>
<svg style="position:absolute;left:0;top:0;filter:blur(0.35px)" width="1024" height="546"><defs><linearGradient id="ag" x1="393" y1="0" x2="590" y2="0" gradientUnits="userSpaceOnUse"><stop offset="0" stop-color="#ad5073"/><stop offset="0.3" stop-color="#d42a62"/><stop offset="1" stop-color="#e8185a"/></linearGradient></defs><path d="M393.2 271.3L582 271.9L582 275.7L393.2 273.3Z" fill="url(#ag)"/><path d="M580.5 270L588 273.8L580.5 277.6Z" fill="#e8185a"/></svg>
</body></html>
